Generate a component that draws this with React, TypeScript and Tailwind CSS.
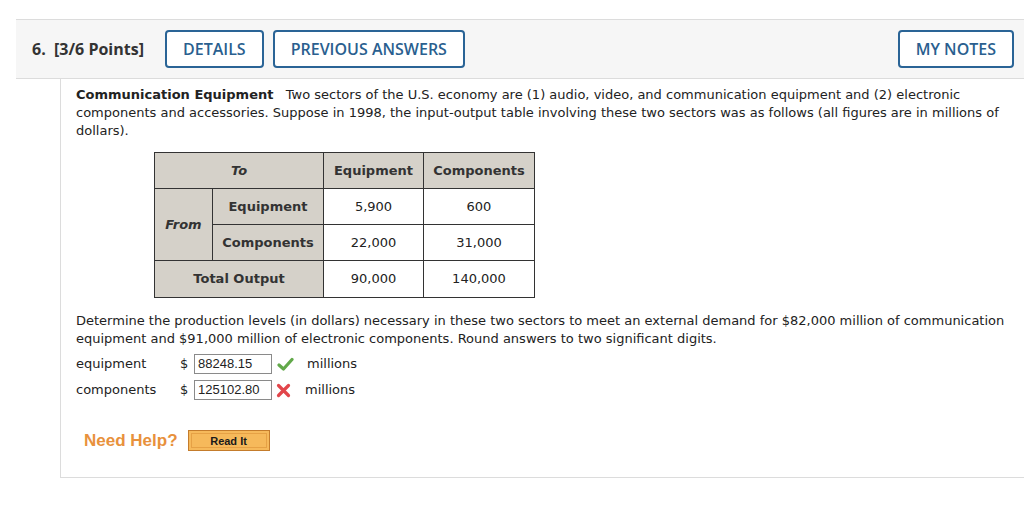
import React from 'react'

const verdana = { fontFamily: '"DejaVu Sans", Verdana, sans-serif' }

function Check() {
  return (
    <svg width="17" height="15" viewBox="0 0 17 15">
      <path d="M2 8 L6.5 12 L15 2.5" fill="none" stroke="#62a94a" strokeWidth="3.2" strokeLinecap="round" strokeLinejoin="round" />
    </svg>
  )
}

function Cross() {
  return (
    <svg width="15" height="15" viewBox="0 0 15 15">
      <path d="M2.5 2.5 L12.5 12.5 M12.5 2.5 L2.5 12.5" fill="none" stroke="#e2464b" strokeWidth="3.2" strokeLinecap="round" />
    </svg>
  )
}

export default function App() {
  const th = 'bg-[#d5d1c9] border border-[#333] font-bold text-[#333] text-center'
  const td = 'bg-white border border-[#333] text-[#222] text-center'
  const btn = 'h-[38px] px-[16px] border-2 border-[#2a6496] rounded-[4px] text-[16px] font-semibold text-[#2a5f8f] bg-white'

  return (
    <div className="w-[1024px] h-[517px] bg-white overflow-hidden pt-[19px]">
      {/* header bar */}
      <div className="ml-[16px] h-[60px] bg-[#f6f6f6] border-y border-[#dcdcdc] flex items-center pl-[16px] pr-[10px]" style={{ fontFamily: '"Open Sans", sans-serif' }}>
        <span className="text-[16px] font-bold text-[#333] w-[133px]">6.&nbsp; [3/6 Points]</span>
        <button className={btn}>DETAILS</button>
        <button className={btn + ' ml-[9px]'}>PREVIOUS ANSWERS</button>
        <button className={btn + ' ml-auto'}>MY NOTES</button>
      </div>

      {/* question body */}
      <div className="ml-[60px] h-[399px] border-l border-b border-[#dcdcdc] pl-[15px] pr-[12px] pt-[7px] text-[13px] leading-[18px] text-[#222]" style={verdana}>
        <p>
          <b>Communication Equipment</b>&nbsp;&nbsp; Two sectors of the U.S. economy are (1) audio, video, and communication equipment and (2) electronic
          components and accessories. Suppose in 1998, the input-output table involving these two sectors was as follows (all figures are in millions of
          dollars).
        </p>

        <table className="mt-[12px] ml-[78px] border-collapse border border-[#333]">
          <tbody>
            <tr className="h-[36px]">
              <td colSpan={2} className={th + ' w-[169px] italic'}>To</td>
              <td className={th + ' w-[100px]'}>Equipment</td>
              <td className={th + ' w-[111px]'}>Components</td>
            </tr>
            <tr className="h-[36px]">
              <td rowSpan={2} className={th + ' w-[58px] italic'}>From</td>
              <td className={th + ' w-[111px]'}>Equipment</td>
              <td className={td}>5,900</td>
              <td className={td}>600</td>
            </tr>
            <tr className="h-[36px]">
              <td className={th}>Components</td>
              <td className={td}>22,000</td>
              <td className={td}>31,000</td>
            </tr>
            <tr className="h-[37px]">
              <td colSpan={2} className={th}>Total Output</td>
              <td className={td}>90,000</td>
              <td className={td}>140,000</td>
            </tr>
          </tbody>
        </table>

        <p className="mt-[14px]">
          Determine the production levels (in dollars) necessary in these two sectors to meet an external demand for $82,000 million of communication
          equipment and $91,000 million of electronic components. Round answers to two significant digits.
        </p>

        <div className="mt-[6px] flex items-center h-[20px]">
          <span className="w-[104px]">equipment</span>
          <span className="w-[14px]">$</span>
          <span className="w-[78px] h-[20px] border border-[#8a8a8a] px-[3px] text-[13px] leading-[18px]" style={{ fontFamily: '"Liberation Sans", Arial, sans-serif' }}>88248.15</span>
          <span className="ml-[5px] w-[30px] flex"><Check /></span>
          <span>millions</span>
        </div>
        <div className="mt-[6px] flex items-center h-[20px]">
          <span className="w-[104px]">components</span>
          <span className="w-[14px]">$</span>
          <span className="w-[78px] h-[20px] border border-[#8a8a8a] px-[3px] text-[13px] leading-[18px]" style={{ fontFamily: '"Liberation Sans", Arial, sans-serif' }}>125102.80</span>
          <span className="ml-[4px] w-[29px] flex"><Cross /></span>
          <span>millions</span>
        </div>

        <div className="mt-[30px] ml-[8px] flex items-center" style={{ fontFamily: '"Liberation Sans", Arial, sans-serif' }}>
          <span className="text-[17px] font-bold text-[#e8913c]">Need Help?</span>
          <span className="ml-[10px] w-[82px] h-[21px] border border-[#c47c2c] bg-[#f6b95b] flex items-center justify-center p-[2px]">
            <span className="w-full h-full border border-[#e6a145] flex items-center justify-center text-[11px] font-bold text-[#1a1a1a]">Read It</span>
          </span>
        </div>
      </div>
    </div>
  )
}
